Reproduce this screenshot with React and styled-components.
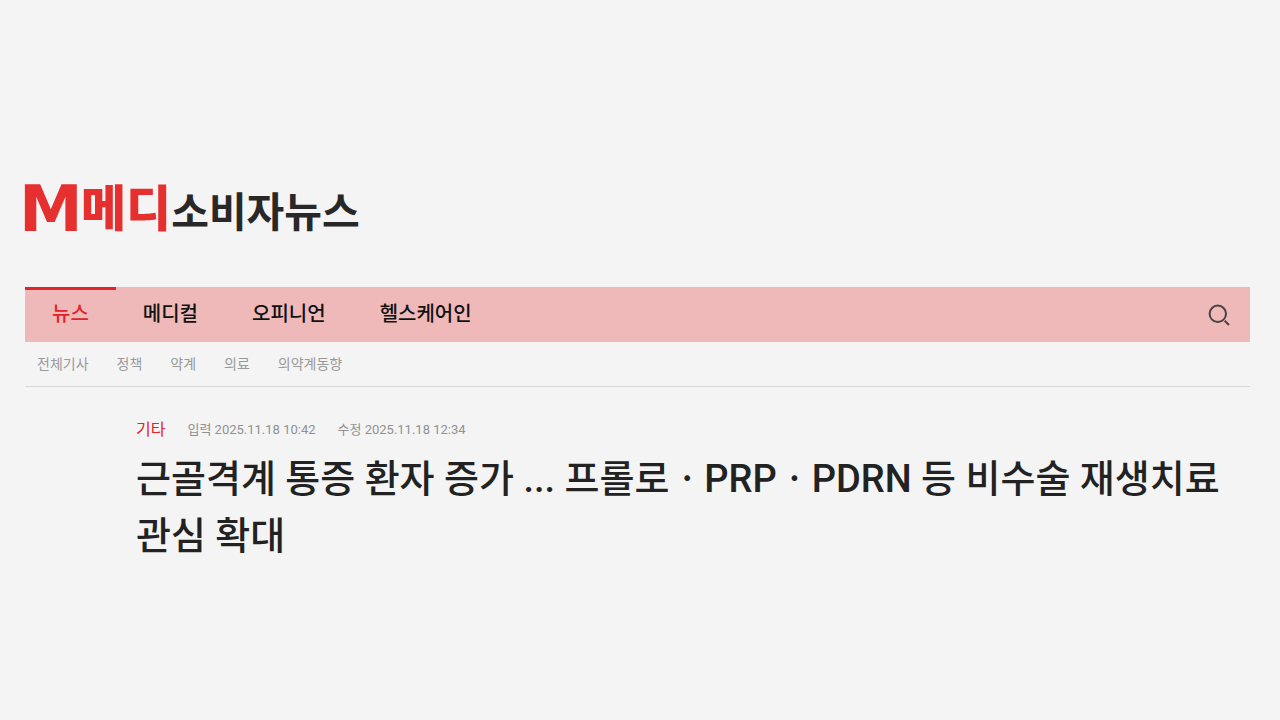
import React from 'react';
import styled, { createGlobalStyle } from 'styled-components';

const GlobalStyle = createGlobalStyle`
  * {
    box-sizing: border-box;
  }
  body {
    margin: 0;
    background: #f4f4f4;
    color: #222;
    font-family: Roboto, "Noto Sans CJK KR", sans-serif;
  }
  a {
    color: inherit;
    text-decoration: none;
  }
`;
const Page = styled.div`
  min-height: 100vh;
  padding: 16px 30px 0 25px;
  display: flex;
  flex-direction: column;
  justify-content: center;
`;
const Logo = styled.a`
  display: flex;
  align-items: flex-start;
  align-self: flex-start;
  height: 76px;
  margin-bottom: 40px;
  line-height: 76px;
  white-space: nowrap;
`;
const LogoMark = styled.span`
  width: 62px;
  margin-left: -6px;
  color: #e63030;
  font-family: "DejaVu Sans", sans-serif;
  font-size: 64px;
  font-weight: 700;
`;
const LogoRed = styled.span`
  color: #e63030;
  font-family: "Noto Sans CJK KR", sans-serif;
  font-size: 49px;
  font-weight: 900;
  line-height: 68px;
`;
const LogoDark = styled.span`
  color: #2a2728;
  font-family: "Noto Sans CJK KR", sans-serif;
  font-size: 41px;
  font-weight: 700;
`;
const NavBar = styled.nav`
  display: flex;
  align-items: center;
  justify-content: space-between;
  height: 55px;
  padding-right: 19px;
  background: #efb9b9;
`;
const NavList = styled.div`
  display: flex;
  height: 100%;
`;
const NavLink = styled.a`
  padding: 0 27px;
  border-top: 3px solid ${props => props.$active ? '#e3222a' : 'transparent'};
  color: ${props => props.$active ? '#e3222a' : '#111'};
  font-size: 20px;
  font-weight: 500;
  line-height: 48px;
`;
const SearchBtn = styled.button`
  display: flex;
  padding: 0;
  border: none;
  background: none;
  color: #444;
  cursor: pointer;
`;
const SubNav = styled.nav`
  display: flex;
  gap: 28px;
  height: 45px;
  padding: 0 12px;
  border-bottom: 1px solid #d8d8d8;
  color: #999;
  font-size: 14px;
  line-height: 44px;
`;
const Article = styled.header`
  padding: 30px 0 0 111px;
`;
const Meta = styled.div`
  display: flex;
  align-items: center;
  gap: 22px;
  color: #919191;
  font-size: 13px;
  line-height: 26px;
`;
const Category = styled.a`
  color: #e3222a;
  font-size: 16px;
`;
const Title = styled.h1`
  margin: 8px 0 0;
  color: #222;
  font-size: 38px;
  font-weight: 500;
  line-height: 57px;
  word-break: keep-all;
`;

const menu = ['뉴스', '메디컬', '오피니언', '헬스케어인'];
const subMenu = ['전체기사', '정책', '약계', '의료', '의약계동향'];

const SearchIcon = () => (
  <svg width="24" height="24" viewBox="0 0 24 24" fill="none" stroke="currentColor" strokeWidth="2">
    <circle cx="10.8" cy="10.8" r="8.2" />
    <path d="M17.7 17.7L22 22" />
  </svg>
);

const App = () => {
  return (
    <Page>
      <GlobalStyle />
      <Logo href="#">
        <LogoMark>M</LogoMark>
        <LogoRed>메디</LogoRed>
        <LogoDark>소비자뉴스</LogoDark>
      </Logo>
      <NavBar>
        <NavList>
          {menu.map((name, i) => <NavLink href="#" key={name} $active={i === 0}>{name}</NavLink>)}
        </NavList>
        <SearchBtn type="button" aria-label="검색"><SearchIcon /></SearchBtn>
      </NavBar>
      <SubNav>
        {subMenu.map(name => <a href="#" key={name}>{name}</a>)}
      </SubNav>
      <Article>
        <Meta>
          <Category href="#">기타</Category>
          <span>입력 2025.11.18 10:42</span>
          <span>수정 2025.11.18 12:34</span>
        </Meta>
        <Title>근골격계 통증 환자 증가 ... 프롤로ㆍPRPㆍPDRN 등 비수술 재생치료 관심 확대</Title>
      </Article>
    </Page>
  )
}

export default App;
